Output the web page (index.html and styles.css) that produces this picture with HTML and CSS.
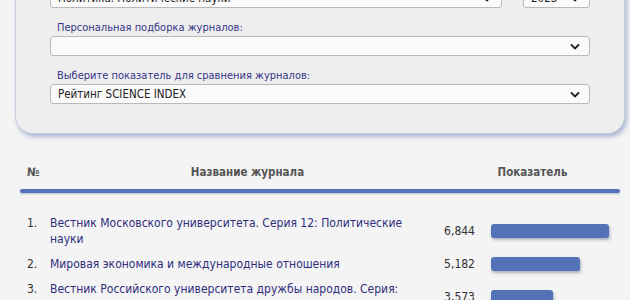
FILE: index.html
```html
<!DOCTYPE html>
<html lang="ru">
<head>
    <meta charset="UTF-8">
    <meta name="viewport" content="width=device-width, initial-scale=1.0">
    <title>Рейтинг журналов</title>
    <link rel="stylesheet" href="styles.css">
</head>
<body>
    <div class="page">
        <div class="filters">
            <div class="filter-row">
                <div class="field field-wide">
                    <div class="label">Тематика:</div>
                    <div class="select">
                        <span>Политика. Политические науки</span>
                        <svg width="10" height="7" viewBox="0 0 10 7"><path d="M1 1.5 L5 5.5 L9 1.5" fill="none" stroke="#222" stroke-width="1.8"/></svg>
                    </div>
                </div>
                <div class="field field-year">
                    <div class="label">Год:</div>
                    <div class="select">
                        <span>2023</span>
                        <svg width="10" height="7" viewBox="0 0 10 7"><path d="M1 1.5 L5 5.5 L9 1.5" fill="none" stroke="#222" stroke-width="1.8"/></svg>
                    </div>
                </div>
            </div>
            <div class="field">
                <div class="label">Персональная подборка журналов:</div>
                <div class="select">
                    <span></span>
                    <svg width="10" height="7" viewBox="0 0 10 7"><path d="M1 1.5 L5 5.5 L9 1.5" fill="none" stroke="#222" stroke-width="1.8"/></svg>
                </div>
            </div>
            <div class="field">
                <div class="label">Выберите показатель для сравнения журналов:</div>
                <div class="select">
                    <span>Рейтинг SCIENCE INDEX</span>
                    <svg width="10" height="7" viewBox="0 0 10 7"><path d="M1 1.5 L5 5.5 L9 1.5" fill="none" stroke="#222" stroke-width="1.8"/></svg>
                </div>
            </div>
        </div>

        <div class="rating">
            <div class="rating-head">
                <div class="col-num">№</div>
                <div class="col-name">Название журнала</div>
                <div class="col-value">Показатель</div>
            </div>
            <div class="rating-line"></div>
            <div class="rating-row">
                <div class="num">1.</div>
                <a class="name" href="#">Вестник Московского университета. Серия 12: Политические науки</a>
                <div class="value">6,844</div>
                <div class="bar-cell"><div class="bar" style="width: 118px"></div></div>
            </div>
            <div class="rating-row">
                <div class="num">2.</div>
                <a class="name" href="#">Мировая экономика и международные отношения</a>
                <div class="value">5,182</div>
                <div class="bar-cell"><div class="bar" style="width: 89px"></div></div>
            </div>
            <div class="rating-row">
                <div class="num">3.</div>
                <a class="name" href="#">Вестник Российского университета дружбы народов. Серия: Политология</a>
                <div class="value">3,573</div>
                <div class="bar-cell"><div class="bar" style="width: 62px"></div></div>
            </div>
        </div>
    </div>
</body>
</html>
```

FILE: styles.css
```css
body{
    margin: 0;
    background-color: #f4f4f4;
    font-family: "DejaVu Sans Condensed", "DejaVu Sans", sans-serif;
    font-size: 12px;
    color: #333;
}
.page{
    margin-top: -50px;
}
.filters{
    margin: 0 5px 0 15px;
    padding: 21px 34px 29px 34px;
    background-color: #eeeeee;
    border: 1px solid #c9cfdc;
    border-radius: 18px;
    box-shadow: 2px 3px 4px rgba(90, 110, 180, 0.45);
}
.filter-row{
    display: flex;
    gap: 21px;
}
.field{
    margin-bottom: 12px;
}
.field:last-child{
    margin-bottom: 0;
}
.field-wide{
    flex: 1;
}
.field-year{
    width: 67px;
}
.label{
    padding-left: 7px;
    line-height: 16px;
    font-size: 11px;
    color: #35358a;
}
.select{
    height: 18px;
    display: flex;
    align-items: center;
    justify-content: space-between;
    padding: 0 9px 0 7px;
    background-color: #fafafa;
    border: 1px solid #b9b9b9;
    border-radius: 3px;
    color: #222;
    font-size: 11.5px;
}
.rating{
    margin: 30px 10px 0 20px;
}
.rating-head{
    display: grid;
    grid-template-columns: 30px 1fr 175px;
    font-weight: bold;
    font-size: 11.5px;
    color: #555;
    line-height: 16px;
}
.col-num{
    padding-left: 7px;
}
.col-name{
    text-align: center;
}
.col-value{
    text-align: center;
}
.rating-line{
    height: 4px;
    margin-top: 9px;
    margin-bottom: 18px;
    background-color: #5472b8;
    border-radius: 2px;
    box-shadow: 0 1px 2px rgba(60, 80, 140, 0.35);
}
.rating-row{
    display: grid;
    grid-template-columns: 30px 1fr 50px 145px;
    align-items: center;
    padding: 4px 0 5px 0;
    line-height: 16px;
}
.num{
    padding-left: 7px;
    color: #333;
    align-self: start;
}
.name{
    color: #2e2e7c;
    text-decoration: none;
}
.value{
    text-align: right;
    color: #333;
}
.bar-cell{
    padding-left: 16px;
}
.bar{
    height: 14px;
    background-color: #5472b8;
    border-radius: 3px;
    box-shadow: 1px 2px 3px rgba(40, 50, 90, 0.35);
}
```
